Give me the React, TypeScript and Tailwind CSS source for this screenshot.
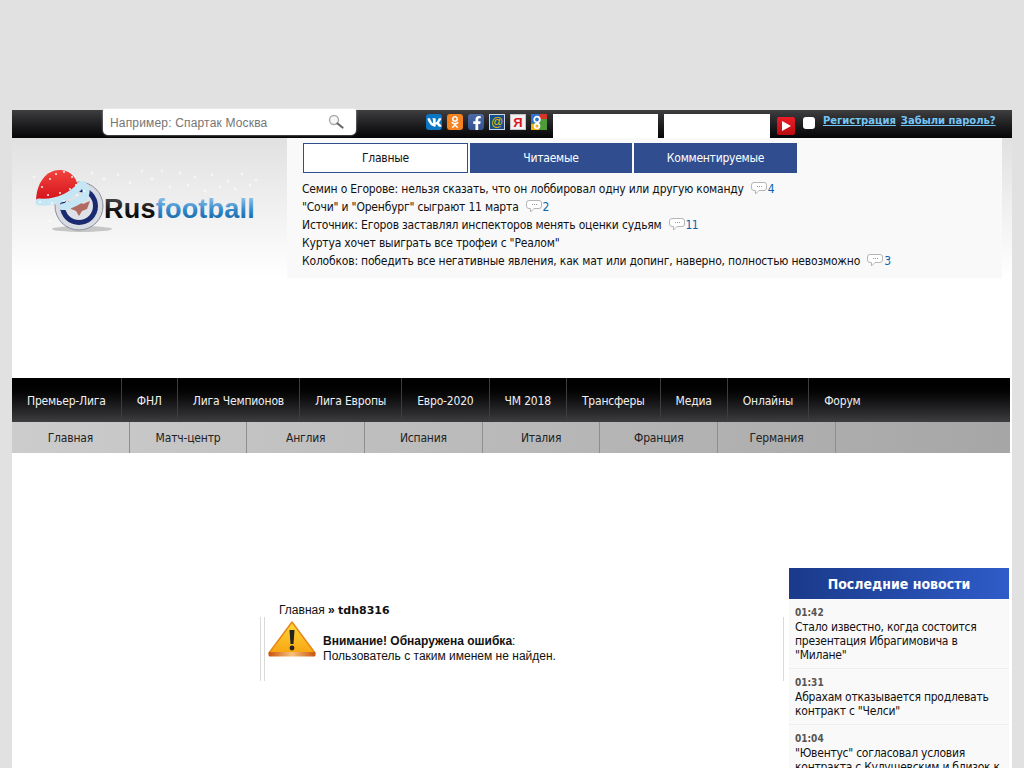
import { FaVk, FaOdnoklassniki, FaFacebookF } from "react-icons/fa";

const tahoma = "font-['DejaVu_Sans_Condensed','DejaVu_Sans',sans-serif]";

const headlines = [
  { title: "Семин о Егорове: нельзя сказать, что он лоббировал одну или другую команду", count: "4" },
  { title: "\"Сочи\" и \"Оренбург\" сыграют 11 марта", count: "2" },
  { title: "Источник: Егоров заставлял инспекторов менять оценки судьям", count: "11" },
  { title: "Куртуа хочет выиграть все трофеи с \"Реалом\"" },
  { title: "Колобков: победить все негативные явления, как мат или допинг, наверно, полностью невозможно", count: "3" },
];

const mainNav = ["Премьер-Лига", "ФНЛ", "Лига Чемпионов", "Лига Европы", "Евро-2020", "ЧМ 2018", "Трансферы", "Медиа", "Онлайны", "Форум"];
const subNav = ["Главная", "Матч-центр", "Англия", "Испания", "Италия", "Франция", "Германия"];

const latest = [
  { time: "01:42", title: "Стало известно, когда состоится презентация Ибрагимовича в \"Милане\"" },
  { time: "01:31", title: "Абрахам отказывается продлевать контракт с \"Челси\"" },
  { time: "01:04", title: "\"Ювентус\" согласовал условия контракта с Кулушевским и близок к" },
];

const CommentIcon = () => (
  <svg width="16" height="13" viewBox="0 0 16 13" className="shrink-0 -mt-[2px]">
    <path d="M3 .5h10a2.5 2.5 0 0 1 2.5 2.5v3A2.5 2.5 0 0 1 13 8.5H8L4.5 12V8.5H3A2.5 2.5 0 0 1 .5 6V3A2.5 2.5 0 0 1 3 .5z" fill="#fff" stroke="#b5b5b5" />
    <path d="M6 4.5h1M8 4.5h1M10 4.5h1" stroke="#999" />
  </svg>
);

const SearchIcon = () => (
  <svg width="16" height="16" viewBox="0 0 16 16">
    <circle cx="6" cy="6" r="4.5" fill="#f4f8fb" stroke="#aaa" strokeWidth="1.4" />
    <path d="M9.5 9.5l5 4" stroke="#666" strokeWidth="2.2" strokeLinecap="round" />
  </svg>
);

const SocialIcons = () => (
  <div className="flex gap-[5px] mt-[4px] ml-[70px]">
    <span className="w-4 h-4 rounded-[3px] bg-[#0a76c4] flex items-center justify-center text-white text-[15px]"><FaVk /></span>
    <span className="w-4 h-4 rounded-[3px] bg-[#f58220] flex items-center justify-center text-white text-[12px]"><FaOdnoklassniki /></span>
    <span className="w-4 h-4 rounded-[3px] bg-gradient-to-b from-[#4c69a8] to-[#34518f] flex items-end justify-end text-white text-[14px] overflow-hidden"><FaFacebookF /></span>
    <span className="w-4 h-4 bg-[#14508c] border border-[#c9d6e2] flex items-center justify-center text-[#f2b705] text-[12px] leading-none font-['Liberation_Sans',sans-serif]">@</span>
    <span className="w-4 h-4 bg-[#f1f1f1] border border-[#c5c5c5] flex items-center justify-center text-[#d8141c] text-[13px] font-bold leading-none font-['Liberation_Sans',sans-serif]">Я</span>
    <svg width="16" height="16" viewBox="0 0 16 16">
      <rect width="16" height="16" fill="#4f9a3a" />
      <rect width="8" height="9" fill="#2f74d0" />
      <rect x="8" width="8" height="5" fill="#d8352a" />
      <rect y="10" width="8" height="6" fill="#f3b10f" />
      <circle cx="6" cy="5.5" r="2.8" fill="none" stroke="#fff" strokeWidth="1.8" />
      <circle cx="6" cy="12" r="2.4" fill="none" stroke="#fff" strokeWidth="1.8" />
    </svg>
  </div>
);

const snow = [[4, 12], [12, 36], [20, 56], [62, 8], [74, 14], [88, 10], [100, 18], [112, 6], [122, 14], [132, 6], [140, 22], [150, 8], [158, 20], [165, 12], [175, 26], [182, 10], [190, 22], [198, 16], [205, 24], [212, 9], [220, 20], [226, 15]];
const flakes = [[12, 22], [20, 14], [26, 9], [34, 7], [42, 12], [18, 30], [30, 28], [40, 24], [46, 20], [54, 26], [10, 37], [22, 38], [34, 36], [47, 30]];

const Logo = () => (
  <svg width="235" height="70" viewBox="0 0 235 70">
    <defs>
      <linearGradient id="blueText" x1="0" y1="0" x2="0" y2="1">
        <stop offset="0" stopColor="#a8cfee" />
        <stop offset="0.55" stopColor="#2f86c8" />
        <stop offset="1" stopColor="#0c5a9c" />
      </linearGradient>
      <linearGradient id="blackText" x1="0" y1="0" x2="0" y2="1">
        <stop offset="0" stopColor="#555" />
        <stop offset="0.6" stopColor="#111" />
        <stop offset="1" stopColor="#000" />
      </linearGradient>
      <linearGradient id="hatRed" x1="0" y1="0" x2="0" y2="1">
        <stop offset="0" stopColor="#f2433e" />
        <stop offset="1" stopColor="#d3101a" />
      </linearGradient>
      <filter id="soft"><feGaussianBlur stdDeviation="0.5" /></filter>
    </defs>
    {snow.map(([x, y]) => (
      <circle key={`${x}-${y}`} cx={x} cy={y} r="1.4" fill="#fff" opacity="0.55" />
    ))}
    <ellipse cx="52" cy="64" rx="30" ry="3" fill="#999" opacity="0.5" filter="url(#soft)" />
    <circle cx="49" cy="41" r="24" fill="#d8dbe2" stroke="#8d909a" />
    <circle cx="49" cy="41" r="19" fill="#1a2a70" />
    <circle cx="49" cy="41" r="14" fill="#dfe1e8" />
    <path d="M38 36l7 3 4-3 4 3 7-3-3 8-5 2-3 5-3-5-5-2z" fill="#a9564a" opacity="0.85" />
    <path d="M6 37C6 16 18 4 31 5c11 1 17 9 17 21-12 8-28 12-42 11z" fill="url(#hatRed)" filter="url(#soft)" />
    <path d="M9 37c15 1 31-4 43-18 6 4 5 11 0 15-7 4-12 7-19 8" fill="none" stroke="#c5e6f4" strokeWidth="7" strokeLinecap="round" strokeLinejoin="round" filter="url(#soft)" />
    {flakes.map(([x, y]) => (
      <circle key={`${x}-${y}`} cx={x} cy={y} r="1.1" fill="#fff" opacity="0.85" />
    ))}
    <text x="74" y="53" fontFamily="Liberation Sans, sans-serif" fontWeight="700" fontSize="27" letterSpacing="0.23" fill="url(#blackText)">
      Rus<tspan fill="url(#blueText)">football</tspan>
    </text>
  </svg>
);

const WarningIcon = () => (
  <svg width="48" height="36" viewBox="0 0 48 36">
    <defs>
      <linearGradient id="warnFill" x1="0" y1="0" x2="0" y2="1">
        <stop offset="0" stopColor="#ffd83a" />
        <stop offset="1" stopColor="#f7a511" />
      </linearGradient>
      <linearGradient id="warnBase" x1="0" y1="0" x2="1" y2="0">
        <stop offset="0" stopColor="#c9530d" />
        <stop offset="0.5" stopColor="#f6c27a" />
        <stop offset="1" stopColor="#c9530d" />
      </linearGradient>
    </defs>
    <path d="M24 1L47 32H1z" fill="url(#warnFill)" stroke="#e8861a" strokeWidth="1.5" strokeLinejoin="round" />
    <rect x="0.5" y="31" width="47" height="4.5" rx="1.5" fill="url(#warnBase)" />
    <path d="M21.5 9h5l-1 14h-3z" fill="#222" />
    <circle cx="24" cy="27" r="2.4" fill="#222" />
  </svg>
);

export default function App() {
  return (
    <div className="h-screen overflow-hidden bg-[#e1e1e1] pt-[110px] pl-[12px]">
      <div className="w-[1000px] bg-white h-[700px]">
        {/* top bar */}
        <div className="relative h-[28px] flex bg-gradient-to-b from-[#3f3f42] to-[#060608]">
          <div className="ml-[91px] -mt-[1px] h-[26px] w-[253px] bg-white rounded-b-[5px] rounded-t-[2px] flex items-center justify-between pl-[7px] pr-[12px] shadow-[0_0_2px_rgba(255,255,255,0.8)]">
            <span className="pt-[1px] text-[12px] tracking-[0.17px] text-[#757575] font-['Liberation_Sans',sans-serif]">Например: Спартак Москва</span>
            <SearchIcon />
          </div>
          <SocialIcons />
          <div className="ml-[6px] mt-[4px] w-[105px] h-[24px] bg-white" />
          <div className="ml-[6px] mt-[4px] w-[106px] h-[24px] bg-white" />
          <div className="ml-[7px] mt-[7px] w-[18px] h-[18px] rounded-[2px] bg-gradient-to-b from-[#ee1c25] to-[#b80d12] flex items-center justify-center">
            <svg width="10" height="10" viewBox="0 0 10 10"><path d="M1 0l9 5-9 5z" fill="#fff" /></svg>
          </div>
          <div className="ml-[8px] mt-[7px] w-[12px] h-[12px] rounded-[3px] bg-white" />
          <div className="ml-[8px] mt-[4px] flex gap-[5px] text-[10px] font-bold text-[#74c6f7] underline leading-[14px] font-['DejaVu_Sans',sans-serif]">
            <span>Регистрация</span>
            <span>Забыли пароль?</span>
          </div>
        </div>

        {/* header */}
        <div className="h-[140px] flex bg-gradient-to-b from-[#e1e1e1] to-white">
          <div className="w-[275px] pl-[18px] pt-[27px]">
            <Logo />
          </div>
          <div className={`w-[715px] h-[140px] bg-[#f9f9f9] pl-[15px] pt-[5px] text-[12px] tracking-[-0.19px] text-[#111] ${tahoma}`}>
            <div className="flex gap-[2px] ml-[1px] text-[12px] tracking-[-0.25px] h-[30px]">
              <div className="w-[165px] bg-white border border-[#2f4d8f] flex items-center justify-center text-[#111]">Главные</div>
              <div className="w-[162px] bg-[#2f4d8f] flex items-center justify-center text-white">Читаемые</div>
              <div className="w-[163px] bg-[#2f4d8f] flex items-center justify-center text-white">Комментируемые</div>
            </div>
            <ul className="mt-[7px]">
              {headlines.map((item) => (
                <li key={item.title} className="h-[18px] flex items-center whitespace-nowrap">
                  <span>{item.title}</span>
                  {item.count && (
                    <span className="flex items-center ml-[7px] text-[#0b63b0]">
                      <CommentIcon />
                      <span className="ml-[1px] tracking-[-0.6px]">{item.count}</span>
                    </span>
                  )}
                </li>
              ))}
            </ul>
          </div>
        </div>

        {/* main nav */}
        <div className={`mt-[100px] w-[998px] ${tahoma} text-[12px] tracking-[-0.18px]`}>
          <div className="h-[44px] flex bg-gradient-to-b from-[#000] to-[#3e3e42] text-[#f0f0f0]">
            {mainNav.map((label) => (
              <div key={label} className="px-[15px] pt-[1px] flex items-center border-r border-[#3d3d40] last:border-r-0">{label}</div>
            ))}
          </div>
          <div className="h-[31px] flex bg-gradient-to-r from-[#cccccc] to-[#a6a6a6] text-[#222]">
            {subNav.map((label) => (
              <div key={label} className="w-[117.7px] flex items-center justify-center border-r border-[#8e8e8e]">{label}</div>
            ))}
          </div>
        </div>

        {/* content */}
        <div className="flex pt-[115px]">
          <div className="w-[777px] pl-[248px] pt-[35px]">
            <div className="pl-[19px] h-[14px] text-[12px] leading-[15px] text-[#111] font-['Liberation_Sans',sans-serif]">
              Главная <b>» <span className="text-[11px] font-['DejaVu_Sans',sans-serif]">tdh8316</span></b>
            </div>
            <div className="w-[524px] h-[64px] border-l border-r border-[#d9d9d9]">
              <div className="ml-[3px] h-full border-l border-[#d9d9d9] pl-[3px] pt-[4px] flex">
                <WarningIcon />
                <div className="ml-[7px] mt-[13px] text-[12px] leading-[15px] text-[#111] font-['Liberation_Sans',sans-serif]">
                  <b>Внимание! Обнаружена ошибка</b>:
                  <br />
                  Пользователь с таким именем не найден.
                </div>
              </div>
            </div>
          </div>

          <aside className={`w-[220px] ${tahoma}`}>
            <div className="h-[31px] pt-[1px] flex items-center justify-center bg-gradient-to-r from-[#1a3a8a] to-[#2f5cc9] text-white text-[14px] font-bold">
              Последние новости
            </div>
            {latest.map((item) => (
              <div key={item.time} className="bg-[#f9f9f9] border-b border-[#eeeeee] px-[6px] pt-[7px] pb-[6px]">
                <div className="text-[10px] font-bold text-[#555] leading-[13px]">{item.time}</div>
                <div className="text-[12px] tracking-[-0.25px] leading-[14px] text-[#111] mt-[1px]">{item.title}</div>
              </div>
            ))}
          </aside>
        </div>
      </div>
    </div>
  );
}
